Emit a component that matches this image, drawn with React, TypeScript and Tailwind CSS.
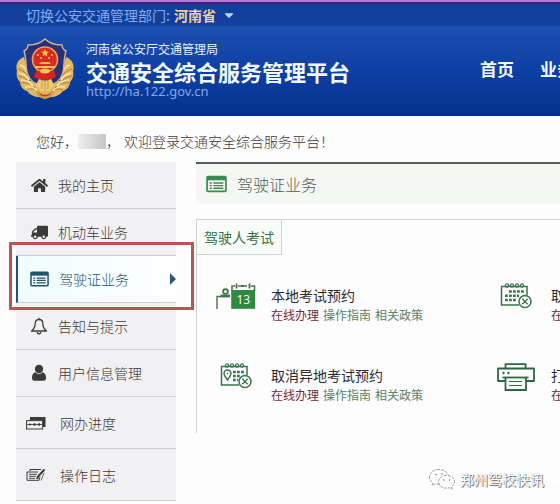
import type { ReactNode } from "react";
import { FaHome, FaTruck, FaCaretDown } from "react-icons/fa";

const ListIcon = ({ className }: { className?: string }) => (
  <svg viewBox="0 0 20 16" className={className} fill="none" aria-hidden="true">
    <rect x="1" y="1" width="18" height="14" rx="1" stroke="currentColor" strokeWidth="1.6" />
    <path d="M1 1h18v3.5H1z" fill="currentColor" />
    <path d="M3.5 7h2M7 7h9.500M3.500 9.500h2M7 9.500h9.500M3.500 12h2M7 12h9.500" stroke="currentColor" strokeWidth="1.300" />
  </svg>
);

const BellIcon = () => (
  <svg viewBox="0 0 18 18" className="h-[18px] w-[18px]" fill="none" stroke="currentColor" strokeWidth="1.3" aria-hidden="true">
    <path d="M9 .8v1.600M1.500 14c2.500-2 3.700-4 3.700-7.500C5.200 4 6.800 2.500 9 2.500s3.800 1.500 3.800 4c0 3.500 1.200 5.500 3.700 7.500z" strokeLinejoin="round" />
    <path d="M7 15.300c.3 1 1 1.500 2 1.500s1.700-.5 2-1.500" />
  </svg>
);

const UserIcon = () => (
  <svg viewBox="0 0 16 18" className="h-[18px] w-4" fill="currentColor" aria-hidden="true">
    <circle cx="8" cy="5" r="4.200" />
    <path d="M4.300 8.300C2 8.800 1 11 1 14c0 1.800 1 2.700 2.600 2.700h8.800c1.600 0 2.600-.9 2.600-2.700 0-3-1-5.200-3.300-5.700C10.600 9.500 9.400 10 8 10s-2.600-.5-3.700-1.700z" />
  </svg>
);

const ProgressIcon = () => (
  <svg viewBox="0 0 20 14" className="h-3.5 w-5" fill="none" aria-hidden="true">
    <path d="M4 1h15.500v10H17V4H4z" fill="currentColor" />
    <rect x=".6" y="4.600" width="16" height="8.400" fill="#f1f0f3" stroke="currentColor" />
    <path d="M1 8.500h15" stroke="currentColor" strokeWidth=".8" />
    <circle cx="4" cy="8.500" r="1.100" fill="currentColor" />
    <circle cx="8.500" cy="8.500" r="1.300" fill="currentColor" />
    <circle cx="13" cy="8.500" r="1.300" fill="currentColor" />
  </svg>
);

const LogIcon = () => (
  <svg viewBox="0 0 20 14" className="h-3.5 w-5" fill="none" stroke="currentColor" aria-hidden="true">
    <path d="M4 3V1.500h11M14 8.500l-1 3.800H1V4h11" />
    <path d="M3 6.300h8M3 8.300h7M3 10.300h6" strokeWidth=".9" />
    <path d="M18.500 1.500 12 8.500l-1 2.500" strokeWidth="2" />
    <path d="M15 12.500 18 5" strokeWidth=".8" />
  </svg>
);

const BookIcon = () => (
  <svg viewBox="0 0 40 28" className="h-7 w-10" fill="none" stroke="#2f8a41" aria-hidden="true">
    <path d="M1 26V13.500h4" stroke="#4d6b55" strokeWidth="1.400" />
    <circle cx="9.500" cy="8.500" r="2.400" stroke="#37764a" strokeWidth="1.800" />
    <path d="M4.500 13h9.500" stroke="#37764a" strokeWidth="2.800" />
    <path d="M16 8V3h3M22 3h3M28 3h3M35 3h3.500v5" stroke="#4d6b55" strokeWidth="1.500" />
    <path d="M20.500 .5v5M33.500 .5v5M25 3h3" stroke="#4d6b55" strokeWidth="1.800" />
    <path d="M15.200 7h24v18.800h-24z" fill="#2f8a41" stroke="none" />
    <text x="27.300" y="21" textAnchor="middle" fontSize="12" fill="#fff" stroke="none" fontFamily="Open Sans, sans-serif">
      13
    </text>
  </svg>
);

const CancelIcon = ({ pin = false }: { pin?: boolean }) => (
  <svg viewBox="0 0 32 26" className="h-[26px] w-8" fill="none" stroke="#37764a" aria-hidden="true">
    <path d="M19 22H1.500V3.500H27V12" strokeWidth="1.500" />
    <g strokeWidth="1.200">
      <circle cx="7" cy="2.500" r="1.600" />
      <circle cx="12" cy="2.500" r="1.600" />
      <circle cx="17" cy="2.500" r="1.600" />
      <circle cx="22" cy="2.500" r="1.600" />
    </g>
    <path d={pin ? "M13 9h11M13 13h7M13 17h5" : "M9 8.500h15M5 12.700h14M5 17h12"} strokeWidth="2.600" strokeDasharray="2.800 1.200" />
    {pin && (
      <>
        <path d="M7.500 17C5 13.500 4 12 4 10.500a3.500 3.500 0 0 1 7 0c0 1.500-1 3-3.500 6.500z" strokeWidth="1.500" />
        <circle cx="7.500" cy="10.500" r=".8" fill="#37764a" stroke="none" />
      </>
    )}
    <circle cx="25" cy="18.500" r="6" fill="#fff" strokeWidth="1.500" />
    <path d="m22.300 15.800 5.400 5.400M27.700 15.800l-5.400 5.400" strokeWidth="1.400" />
  </svg>
);

const PrinterIcon = () => (
  <svg viewBox="0 0 40 28" className="h-7 w-10" fill="none" stroke="#2c6845" strokeWidth="1.800" aria-hidden="true">
    <path d="M9.500 5V1.200h20V5" />
    <path d="M9.500 18H2V5.500h36V18h-8" strokeLinejoin="round" />
    <path d="M6.500 14.500h26" />
    <path d="M9.500 14.500V27h20.500V14.500" />
    <path d="M13 18.500h13M13 22.500h13" strokeWidth="1.200" />
    <circle cx="7.500" cy="10" r="1.200" fill="#2c6845" stroke="none" />
    <circle cx="12.500" cy="10" r="1.200" fill="#2c6845" stroke="none" />
  </svg>
);

const Emblem = () => (
  <svg viewBox="0 0 58 62" className="h-[62px] w-[58px] shrink-0" aria-hidden="true">
    <path d="M8 19C2 21-1 27 1 33c-1 4 0 8 3 11 0 4 3 8 7 9 3 4 8 6 12 6l6 2 6-2c4 0 9-2 12-6 4-1 7-5 7-9 3-3 4-7 3-11 2-6-1-12-7-14l-6 24H14z" fill="#e3b661" />
    <g stroke="#b07f34" strokeWidth="1" fill="none">
      <path d="M2 31c5 1 8 4 10 8M2 38c6 1 10 4 12 8M5 45c6-1 11 1 14 5M11 52c5-2 9-1 13 3" />
      <path d="M56 31c-5 1-8 4-10 8M56 38c-6 1-10 4-12 8M53 45c-6-1-11 1-14 5M47 52c-5-2-9-1-13 3" />
    </g>
    <g stroke="#fae7ac" strokeWidth="1.400" fill="none">
      <path d="M4 27c4 1 6 3 7 7M3 35c5 1 8 3 10 7M5 42c5 0 9 2 12 6M9 49c5-1 9 0 12 4" />
      <path d="M54 27c-4 1-6 3-7 7M55 35c-5 1-8 3-10 7M53 42c-5 0-9 2-12 6M49 49c-5-1-9 0-12 4" />
    </g>
    <path d="M29 1c4 4 10 6 17 6 0 3 2 5 4 6-4 12 1 22-9 31-3 2-7 3-12 3s-9-1-12-3C7 35 12 25 8 13c2-1 4-3 4-6 7 0 13-2 17-6z" fill="#2b3174" stroke="#cdb79c" strokeWidth="1.400" />
    <circle cx="29" cy="21.500" r="12.500" fill="#dc2820" stroke="#eda35c" strokeWidth="1.600" />
    <path d="m29 11 1.100 2.500 2.800.3-2.100 1.800.7 2.700-2.500-1.400-2.500 1.400.7-2.700-2.100-1.800 2.800-.3z" fill="#ffc83e" />
    <g fill="#ffc83e">
      <circle cx="22" cy="17" r="1.100" />
      <circle cx="25" cy="20" r="1.100" />
      <circle cx="33" cy="20" r="1.100" />
      <circle cx="36" cy="17" r="1.100" />
      <path d="M19 28h20l-1 2H20zM23 26l2-2h8l2 2z" />
    </g>
    <path d="M20 32c5 2 13 2 18 0l2 7c-6 4-16 4-22 0z" fill="#d3261f" />
    <ellipse cx="29" cy="33" rx="5" ry="2.500" fill="#f2c263" />
    <path d="M23 41c4 2 8 2 12 0l3 6-5 6h-8l-5-6z" fill="#f0cb76" />
    <path d="M26 42v9M29 43v10M32 42v9" stroke="#c08d3c" strokeWidth=".8" />
    <path d="M19 53c7 4 13 4 20 0l-3 5-7 3-7-3z" fill="#d19a45" />
    <path d="M24 56c3 2 7 2 10 0" stroke="#b23c22" strokeWidth="1.500" fill="none" />
  </svg>
);

const WechatIcon = () => (
  <svg viewBox="0 0 28 22" className="h-[22px] w-7" fill="#fff" stroke="#8b8b8b" strokeWidth=".8" strokeDasharray="3 1" aria-hidden="true">
    <path d="M11 1.500C5.500 1.500 1.500 5 1.500 9c0 2.500 1.300 4.500 3.300 5.800L4 17.500l3.500-1.700c1 .3 2.300.4 3.500.4 5.500 0 9.500-3.200 9.500-7.200S16.500 1.500 11 1.500z" />
    <path d="M18.500 7.500c-4.700 0-8 2.800-8 6.300s3.300 6.400 8 6.400c1 0 2-.2 3-.5l2.700 1.500-.7-2.400c2-1.300 3-3 3-5 0-3.500-3.300-6.300-8-6.300z" />
    <g fill="#777" stroke="none">
      <circle cx="8" cy="6.500" r=".8" />
      <circle cx="14" cy="6" r=".8" />
      <circle cx="16" cy="12" r=".8" />
      <circle cx="21.500" cy="12" r=".8" />
    </g>
  </svg>
);

type MenuItem = { name: string; icon: ReactNode; size: string; active?: boolean };

const menuItems: MenuItem[] = [
  { name: "我的主页", icon: <FaHome className="h-[17px] w-[17px]" />, size: "h-[47px] gap-2.5 pl-3.5" },
  { name: "机动车业务", icon: <FaTruck className="h-[17px] w-[17px] -scale-x-100" />, size: "h-[47px] gap-2.5 pl-3.5" },
  {
    name: "驾驶证业务",
    icon: <ListIcon className="h-4 w-[19px]" />,
    size: "h-[47px] gap-2.5 pl-3",
    active: true,
  },
  { name: "告知与提示", icon: <BellIcon />, size: "h-[47px] gap-2.5 pl-3.5" },
  { name: "用户信息管理", icon: <UserIcon />, size: "h-[47px] gap-2.5 pl-3.5" },
  { name: "网办进度", icon: <ProgressIcon />, size: "h-[52px] gap-3.5 pl-2.5" },
  { name: "操作日志", icon: <LogIcon />, size: "h-[52px] gap-3.5 pl-2.5" },
];

const services = [
  { name: "本地考试预约", icon: <BookIcon /> },
  { name: "取消考试预约", icon: <CancelIcon /> },
  { name: "取消异地考试预约", icon: <CancelIcon pin /> },
  { name: "打印考试预约凭证", icon: <PrinterIcon /> },
];

const Header = () => (
  <header className="border-t-2 border-[#b377d3] text-white">
    <div className="flex h-6 items-center gap-1 border-t-2 border-[#43207c] bg-[#10409c] pl-[26px] text-sm leading-5">
      <span className="text-[#86aaf0]">切换公安交通管理部门:</span>
      <button type="button" className="flex items-center gap-1.5 font-bold text-[#f3cf93]">
        河南省
        <FaCaretDown className="h-3.5 w-3.5 text-[#b9dcfa]" />
      </button>
    </div>
    <div className="flex h-[90px] items-center bg-linear-to-b from-[#1d4fb0] via-[#0e3fa4] to-[#04328b] pb-1 pl-4">
      <Emblem />
      <div className="ml-3 shrink-0">
        <p className="text-xs leading-4 text-[#e3f1ff]">河南省公安厅交通管理局</p>
        <h1 className="text-[22px] leading-7 font-bold text-[#f0fbff]">交通安全综合服务管理平台</h1>
        <p className="font-['Noto_Sans',sans-serif] text-[13px] leading-3 text-[#82a9ee]">http://ha.122.gov.cn</p>
      </div>
      <nav className="ml-[130px] flex shrink-0 gap-[26px] text-[17px] font-bold text-[#f0fbff]">
        <a href="#home">首页</a>
        <a href="#services">业务办理</a>
      </nav>
    </div>
  </header>
);

const Sidebar = () => (
  <nav className="w-40 shrink-0 bg-[#f1f0f3] text-sm font-light text-[#3a3a3a]">
    {menuItems.map((item) => (
      <a
        key={item.name}
        href="#menu"
        className={`relative flex items-center border-b border-[#cfcfd2] ${item.size} ${
          item.active ? "border-l-2 border-l-[#245172] bg-linear-to-r from-[#effcfd] to-white text-[#1f566d]" : ""
        }`}
      >
        <span className="flex min-w-[18px] justify-center">{item.icon}</span>
        {item.name}
        {item.active && (
          <>
            <svg viewBox="0 0 6 12" className="ml-auto h-3 w-1.5" fill="#285b78" aria-hidden="true">
              <path d="M0 0l6 6-6 6z" />
            </svg>
            <span className="pointer-events-none absolute -top-3.5 -right-[18px] -bottom-2 -left-[9px] z-10 border-[3px] border-[#b8564f]" />
          </>
        )}
      </a>
    ))}
  </nav>
);

const Services = () => (
  <main className="min-w-0 flex-1">
    <div className="flex h-[42px] items-center gap-2.5 border-t-2 border-[#53605a] bg-[#f4f7f4] pl-2.5">
      <ListIcon className="h-[18px] w-[21px] text-[#3a8a4d]" />
      <h2 className="text-base font-light text-[#4f5f54]">驾驶证业务</h2>
    </div>
    <section className="mt-[15px] h-[214px] border-t border-l border-[#cfd2d0]">
      <h3 className="inline-flex h-[35px] items-center border-r border-b border-[#cfd2d0] bg-[#f9fbf9] px-[7px] text-sm text-[#2f7441]">
        驾驶人考试
      </h3>
      <div className="mt-7 grid grid-cols-[280px_280px] gap-y-9">
        {services.map((service) => (
          <div key={service.name} className="flex h-11 pl-[19px] whitespace-nowrap">
            <div className="flex w-10 shrink-0 items-start justify-center">{service.icon}</div>
            <div className="ml-[15px]">
              <p className="text-sm leading-6 text-[#2c2c2c]">{service.name}</p>
              <div className="flex gap-1 text-xs leading-4">
                <a href="#apply" className="text-[#6d2b3b]">在线办理</a>
                <a href="#guide" className="text-[#588168]">操作指南</a>
                <a href="#policy" className="text-[#588168]">相关政策</a>
              </div>
            </div>
          </div>
        ))}
      </div>
    </section>
  </main>
);

export default function App() {
  return (
    <div className="relative min-h-screen overflow-hidden bg-[#fefdfe] font-['Noto_Sans_CJK_SC',sans-serif]">
      <Header />
      <p className="flex h-[46px] items-center pt-1 pl-9 text-sm font-light text-[#3a3a3a]">
        您好，
        <span className="h-[15px] w-7 bg-linear-to-r from-[#efeff0] to-[#c6c6c8]" />
        ，
        <span className="ml-1">欢迎登录交通安全综合服务平台！</span>
      </p>
      <div className="flex gap-5 pl-4">
        <Sidebar />
        <Services />
      </div>
      <div className="absolute right-4 bottom-3.5 flex items-center gap-1 text-sm text-white [text-shadow:1px_1px_0_#777,0_0_1px_#999]">
        <WechatIcon />
        郑州驾校快讯
      </div>
    </div>
  );
}
